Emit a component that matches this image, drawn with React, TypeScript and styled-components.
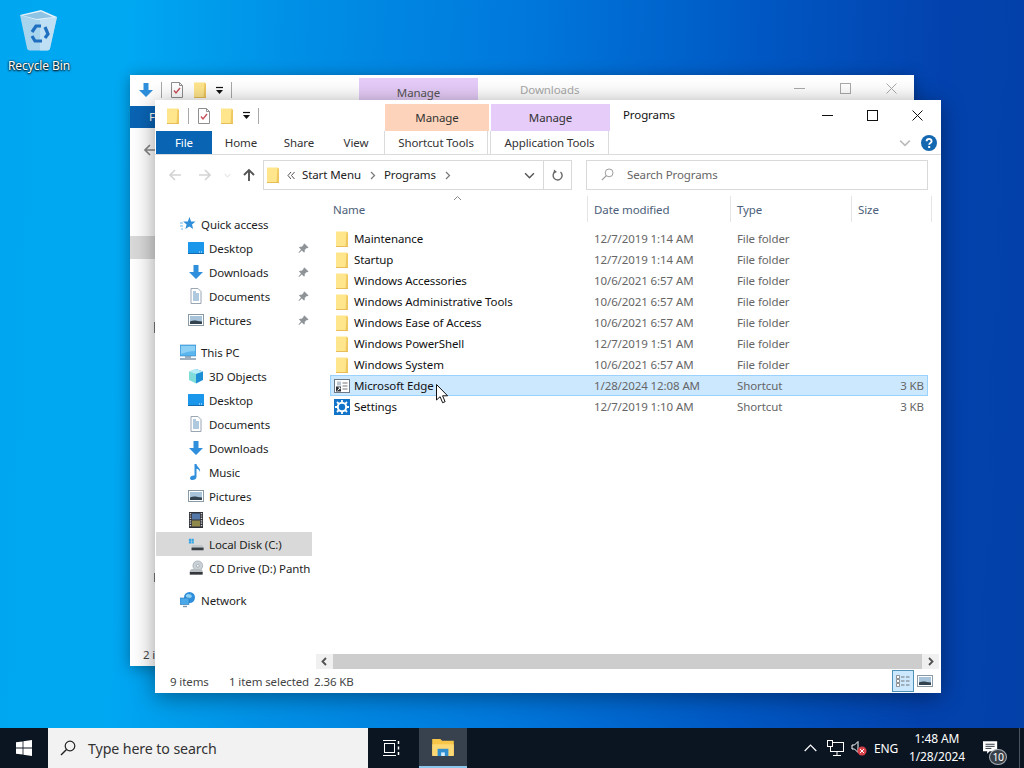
import React from "react";
import styled, { createGlobalStyle } from "styled-components";

const UI_FONT = `"Noto Sans", "Open Sans", "Liberation Sans", sans-serif`;

const GlobalStyle = createGlobalStyle`
  html, body {
    margin: 0;
    padding: 0;
    width: 1024px;
    height: 768px;
    overflow: hidden;
  }
  * {
    box-sizing: border-box;
  }
`;

/* ---------- icons ---------- */

const FolderIcon = () => (
  <svg width="16" height="16" viewBox="0 0 16 16">
    <path d="M2 0.5h10.5l1.5 1.5v13.5H2z" fill="#ffe68c" />
    <path d="M12.5 0.5l1.5 1.5v13.5h-2.5z" fill="#f0c860" />
    <path d="M2 15h12v1H2z" fill="#e8bd58" />
  </svg>
);

const CheckDoc = () => (
  <svg width="16" height="16" viewBox="0 0 16 16">
    <path d="M2.5.5h8l3 3v12h-11z" fill="#fff" stroke="#8f8f8f" />
    <path d="M10.5.5v3h3" fill="none" stroke="#8f8f8f" />
    <path d="M5 8.5l2 2.5 4-5" fill="none" stroke="#c8505a" strokeWidth="1.4" />
  </svg>
);

const ArrowDownIcon = () => (
  <svg width="16" height="16" viewBox="0 0 16 16">
    <path d="M5.5 1h5v7H15l-7 7-7-7h4.5z" fill="#2f8fdc" />
  </svg>
);

const DropMark = () => (
  <svg width="9" height="9" viewBox="0 0 9 9">
    <path d="M1 1.5h7" stroke="#111" strokeWidth="1.2" />
    <path d="M1 4h7L4.5 8z" fill="#111" />
  </svg>
);

const StarIcon = () => (
  <svg width="16" height="16" viewBox="0 0 16 16">
    <path d="M9.5 1l1.6 4.4 4.4.2-3.5 2.8 1.2 4.6-3.9-2.6-3.9 2.6 1.2-4.6-3.5-2.8 4.7-.2z" fill="#2f8fd8" />
    <path d="M0 7h3M0 10h3M1 13h2" stroke="#6db6ea" />
  </svg>
);

const DesktopIcon = () => (
  <svg width="16" height="16" viewBox="0 0 16 16">
    <rect x="0" y="2" width="16" height="11" rx="0.5" fill="#1a96ea" />
    <path d="M0 13h16v1H0z" fill="#1569ad" />
    <path d="M11 12h1M13 12h1" stroke="#dceefb" />
  </svg>
);

const DocIcon = () => (
  <svg width="16" height="16" viewBox="0 0 16 16">
    <path d="M3 .5h7l3 3v12H3z" fill="#fff" stroke="#9aa7b2" />
    <path d="M5 4h3M5 6h6M5 8h6M5 10h6M5 12h6" stroke="#5f93bd" />
  </svg>
);

const PictureIcon = () => (
  <svg width="16" height="16" viewBox="0 0 16 16">
    <rect x="0.5" y="2.5" width="15" height="11" fill="#fff" stroke="#8a99a6" />
    <rect x="2" y="4" width="12" height="8" fill="#a8c4da" />
    <path d="M2 9.5c4-2 7-.5 12 0V12H2z" fill="#33424f" />
  </svg>
);

const MonitorIcon = () => (
  <svg width="16" height="16" viewBox="0 0 16 16">
    <rect x="0" y="1" width="16" height="11" fill="#5cb6ee" stroke="#2b86c8" strokeWidth="0.6" />
    <path d="M1 2h14v5c-5 0-9 1-14 3z" fill="#8dd0f6" />
    <path d="M5 13h6M0 15h16" stroke="#7f97ab" strokeWidth="1.4" />
  </svg>
);

const CubeIcon = () => (
  <svg width="16" height="16" viewBox="0 0 16 16">
    <path d="M8 1l7 2.5V12l-7 3.5z" fill="#1d8fd6" />
    <path d="M8 1L1 3.5V12l7 3.5z" fill="#7fdcd8" />
    <path d="M8 1l7 2.5L8 6 1 3.5z" fill="#b8ecf6" />
  </svg>
);

const MusicIcon = () => (
  <svg width="16" height="16" viewBox="0 0 16 16">
    <path d="M6.5 0h2c.3 3 4.5 4 3.5 8-.5-2-2-3-3.5-3.3V13c0 2-2 3-4 3-1.5 0-2.5-.7-2.5-1.8 0-1.7 2-3 4.5-2.7z" fill="#2f8fdc" />
  </svg>
);

const VideoIcon = () => (
  <svg width="16" height="16" viewBox="0 0 16 16">
    <rect x="1" y="0" width="14" height="16" fill="#2e3138" />
    <rect x="4" y="1.5" width="8" height="6" fill="#5478a8" />
    <rect x="4" y="8.5" width="8" height="6" fill="#8f8a4c" />
    <path d="M2.5 1v14M13.5 1v14" stroke="#d5d5d5" strokeWidth="1.4" strokeDasharray="1.2 1.2" />
  </svg>
);

const DiskIcon = () => (
  <svg width="18" height="16" viewBox="0 0 18 16">
    <path d="M1 2h2.5v2.500H1zM4 2h2.500v2.500H4zM1 5h2.500v2.500H1zM4 5h2.500v2.500H4z" fill="#33a7e6" />
    <path d="M4 10l1-1h11l1.500 3v3H4z" fill="#c3c8cc" />
    <rect x="4" y="12" width="13.5" height="3" fill="#3a3f45" />
  </svg>
);

const CdIcon = () => (
  <svg width="18" height="16" viewBox="0 0 18 16">
    <circle cx="11" cy="5.5" r="5.5" fill="#c9d0d6" stroke="#8d969e" strokeWidth="0.6" />
    <circle cx="11" cy="5.5" r="1.5" fill="#fff" stroke="#7f8890" strokeWidth="0.6" />
    <path d="M2 11l2-2h11l1.500 2.500V13H2z" fill="#b9bec3" />
    <rect x="2" y="12.5" width="14.5" height="3" fill="#34383d" />
  </svg>
);

const NetworkIcon = () => (
  <svg width="16" height="16" viewBox="0 0 16 16">
    <circle cx="9.5" cy="5.5" r="5.5" fill="#2f8fdc" />
    <path d="M6 3c2-2 5-1 6 1-1 3-4 3-6 1z" fill="#8ed0f4" />
    <rect x="0" y="6" width="9" height="6.5" fill="#4aa8e8" stroke="#2175b4" strokeWidth="0.6" />
    <path d="M3 14.5h4" stroke="#7f97ab" strokeWidth="1.4" />
  </svg>
);

const PinIcon = () => (
  <svg width="11" height="11" viewBox="0 0 11 11">
    <path d="M6.5.5l4 4-1 .7-.8-.3-2 2 .1 2-.9.6-2-2L1 10 .5 9.500l2.500-3-2-2 .7-.8 2 .1 2-2-.3-.9z" fill="#8f9499" />
  </svg>
);

const SearchGlass = ({ color, size }: { color: string; size: number }) => (
  <svg width={size} height={size} viewBox="0 0 16 16">
    <circle cx="10" cy="6" r="4.8" fill="none" stroke={color} strokeWidth="1.2" />
    <path d="M6.500 9.500L1 15" stroke={color} strokeWidth="1.4" />
  </svg>
);

const ArrowLeft = ({ color }: { color: string }) => (
  <svg width="14" height="14" viewBox="0 0 14 14">
    <path d="M13 7H2M7 2L2 7l5 5" fill="none" stroke={color} strokeWidth="1.7" />
  </svg>
);

const ArrowRight = ({ color }: { color: string }) => (
  <svg width="14" height="14" viewBox="0 0 14 14">
    <path d="M1 7h11M7 2l5 5-5 5" fill="none" stroke={color} strokeWidth="1.7" />
  </svg>
);

const ArrowUp = ({ color }: { color: string }) => (
  <svg width="14" height="14" viewBox="0 0 14 14">
    <path d="M7 13V2M2 7l5-5 5 5" fill="none" stroke={color} strokeWidth="1.9" />
  </svg>
);

const Chevron = ({ color, size = 10 }: { color: string; size?: number }) => (
  <svg width={size} height={size} viewBox="0 0 10 10">
    <path d="M1 3l4 4 4-4" fill="none" stroke={color} strokeWidth="1.3" />
  </svg>
);

const CaretUp = () => (
  <svg width="9" height="6" viewBox="0 0 9 6">
    <path d="M1 5l3.500-3.500L8 5" fill="none" stroke="#888" />
  </svg>
);

const CrumbSep = ({ double }: { double?: boolean }) => (
  <svg width="8" height="9" viewBox="0 0 8 9">
    {double ? (
      <path d="M4 1L1 4.500 4 8M7.500 1l-3 3.500 3 3.500" fill="none" stroke="#555" />
    ) : (
      <path d="M2 1l3.500 3.500L2 8" fill="none" stroke="#777" strokeWidth="1.2" />
    )}
  </svg>
);

const ScrollChevron = () => (
  <svg width="8" height="9" viewBox="0 0 8 9">
    <path d="M2 1l3.500 3.500L2 8" fill="none" stroke="#505050" strokeWidth="1.8" />
  </svg>
);

const RefreshIcon = () => (
  <svg width="13" height="13" viewBox="0 0 13 13">
    <path d="M9.500 3a4.500 4.500 0 1 1-5.500-.2" fill="none" stroke="#666" strokeWidth="1.4" />
    <path d="M3 .5l3 2.500-3.500 1.500z" fill="#666" />
  </svg>
);

const Minimize = ({ color }: { color: string }) => (
  <svg width="11" height="11" viewBox="0 0 11 11">
    <path d="M0 5.500h11" stroke={color} />
  </svg>
);

const Maximize = ({ color }: { color: string }) => (
  <svg width="11" height="11" viewBox="0 0 11 11">
    <rect x="0.5" y="0.5" width="10" height="10" fill="none" stroke={color} />
  </svg>
);

const CloseMark = ({ color }: { color: string }) => (
  <svg width="11" height="11" viewBox="0 0 11 11">
    <path d="M.5.500l10 10M10.500.500l-10 10" stroke={color} />
  </svg>
);

const ShortcutIcon = () => (
  <svg width="16" height="16" viewBox="0 0 16 16">
    <rect x="0.5" y="1.5" width="15" height="13" fill="#fff" stroke="#6a7a88" />
    <path d="M8.500 5h5M8.500 8h5M8.500 11h5" stroke="#777" />
    <path d="M3 3.500h4v4H3z" fill="#b9c6d2" />
    <rect x="2" y="8.5" width="5" height="5" fill="#2c3136" />
    <path d="M3.500 12.500L6 10M4.500 9.800H6v1.500" stroke="#fff" fill="none" />
  </svg>
);

const SettingsIcon = () => (
  <svg width="16" height="16" viewBox="0 0 16 16">
    <rect width="16" height="16" fill="#1273c9" />
    <circle cx="8" cy="8" r="4.2" fill="none" stroke="#fff" strokeWidth="2" />
    <path d="M8 1v2.500M8 12.500V15M1 8h2.500M12.500 8H15M3 3l1.800 1.800M11.200 11.200L13 13M13 3l-1.800 1.800M4.800 11.200L3 13" stroke="#fff" strokeWidth="1.8" />
  </svg>
);

const HelpIcon = () => (
  <svg width="16" height="16" viewBox="0 0 16 16">
    <circle cx="8" cy="8" r="8" fill="#1468b0" />
    <path d="M5.600 6.200c0-3.200 5-3.200 5 0 0 2-2.400 1.800-2.400 3.600" fill="none" stroke="#fff" strokeWidth="1.8" />
    <rect x="7.2" y="11" width="2" height="2" fill="#fff" />
  </svg>
);

const ViewDetails = () => (
  <svg width="16" height="16" viewBox="0 0 16 16">
    <path d="M1.500 2.500h3v3h-3zM1.500 6.500h3v3h-3zM1.500 10.500h3v3h-3z" fill="#fff" stroke="#777" strokeWidth="0.8" />
    <path d="M6 4h3.500M11 4h3.500M6 8h3.500M11 8h3.500M6 12h3.500M11 12h3.500" stroke="#777" />
  </svg>
);

const Cursor = () => (
  <svg width="13" height="20" viewBox="0 0 13 20">
    <path d="M.5.500v15.500l3.600-3.300 2.500 6 2.500-1-2.500-5.900h5z" fill="#fff" stroke="#111" />
  </svg>
);

const RecycleBinIcon = () => (
  <svg width="42" height="44" viewBox="0 0 42 44">
    <path d="M2 7l7 33c.3 1.500 1 2.500 3 2.500h17c2 0 2.800-1 3.100-2.500L39 9z" fill="#a9d4ee" />
    <path d="M22 8l17 1-7 31.500c-.3 1.200-1 2-2.500 2H22z" fill="#c9e6f6" opacity="0.7" />
    <path d="M2 7l21-5 16 7-20 3z" fill="#e6f4fb" />
    <path d="M5 7.500l18-4 12 5.500-16.500 2z" fill="#8fc3e3" />
    <g fill="none" stroke="#1f6fc0" strokeWidth="3.2">
      <path d="M14 24l4-6h5" />
      <path d="M27 19l3 7-3 4" />
      <path d="M24 33h-7l-3-5" />
    </g>
  </svg>
);

const WindowsLogo = () => (
  <svg width="16" height="16" viewBox="0 0 16 16">
    <path d="M0 2.300l6.600-.9v6.200H0zM7.400 1.300L16 0v7.600H7.400zM0 8.400h6.600v6.200L0 13.700zM7.400 8.400H16V16l-8.600-1.200z" fill="#fff" />
  </svg>
);

const TaskViewIcon = () => (
  <svg width="17" height="16" viewBox="0 0 17 16">
    <path d="M0 .5h13M0 15.500h13" stroke="#fff" />
    <rect x="1.5" y="3.5" width="10" height="9" fill="none" stroke="#fff" />
    <path d="M15.500 1v3M15.500 6.500v3M15.500 12v3" stroke="#fff" strokeWidth="1.5" />
  </svg>
);

const ExplorerIcon = () => (
  <svg width="22" height="18" viewBox="0 0 24 20">
    <path d="M0 1h9l2 2h13v16H0z" fill="#f7c548" />
    <path d="M0 7h24v13H0z" fill="#fbd874" />
    <path d="M6 12h12v8H6z" fill="#2f8fd0" />
    <path d="M10 16h4v4h-4z" fill="#d9eefb" />
  </svg>
);

const TrayCaret = () => (
  <svg width="13" height="8" viewBox="0 0 13 8">
    <path d="M.7 7l5.800-6 5.800 6" fill="none" stroke="#fff" strokeWidth="1.2" />
  </svg>
);

const TrayNetwork = () => (
  <svg width="17" height="16" viewBox="0 0 17 16">
    <rect x="3.5" y="2.5" width="13" height="9" fill="none" stroke="#fff" />
    <rect x="0.5" y="0.5" width="5" height="6" fill="#0b1420" stroke="#fff" />
    <path d="M10 12v3M6 15.500h8" stroke="#fff" />
  </svg>
);

const TraySpeaker = () => (
  <svg width="16" height="16" viewBox="0 0 16 16">
    <path d="M1 5h2.500L7 1.500v11L3.500 9H1z" fill="none" stroke="#fff" />
    <circle cx="11" cy="11" r="4.5" fill="#d9414a" />
    <path d="M9 9l4 4M13 9l-4 4" stroke="#fff" />
  </svg>
);

const TrayNotification = () => (
  <svg width="15" height="14" viewBox="0 0 18 16">
    <path d="M0 0h17v12H8l-3 3v-3H0z" fill="#fff" />
    <path d="M3 3.500h11M3 6h11M3 8.500h7" stroke="#0b1420" />
  </svg>
);

/* ---------- data ---------- */

const quickAccess = [
  { label: "Desktop", icon: <DesktopIcon /> },
  { label: "Downloads", icon: <ArrowDownIcon /> },
  { label: "Documents", icon: <DocIcon /> },
  { label: "Pictures", icon: <PictureIcon /> },
];

const thisPc = [
  { label: "3D Objects", icon: <CubeIcon /> },
  { label: "Desktop", icon: <DesktopIcon /> },
  { label: "Documents", icon: <DocIcon /> },
  { label: "Downloads", icon: <ArrowDownIcon /> },
  { label: "Music", icon: <MusicIcon /> },
  { label: "Pictures", icon: <PictureIcon /> },
  { label: "Videos", icon: <VideoIcon /> },
  { label: "Local Disk (C:)", icon: <DiskIcon />, active: true },
  { label: "CD Drive (D:) Panth", icon: <CdIcon /> },
];

const files = [
  { name: "Maintenance", date: "12/7/2019 1:14 AM", type: "File folder", size: "", icon: <FolderIcon /> },
  { name: "Startup", date: "12/7/2019 1:14 AM", type: "File folder", size: "", icon: <FolderIcon /> },
  { name: "Windows Accessories", date: "10/6/2021 6:57 AM", type: "File folder", size: "", icon: <FolderIcon /> },
  { name: "Windows Administrative Tools", date: "10/6/2021 6:57 AM", type: "File folder", size: "", icon: <FolderIcon /> },
  { name: "Windows Ease of Access", date: "10/6/2021 6:57 AM", type: "File folder", size: "", icon: <FolderIcon /> },
  { name: "Windows PowerShell", date: "12/7/2019 1:51 AM", type: "File folder", size: "", icon: <FolderIcon /> },
  { name: "Windows System", date: "10/6/2021 6:57 AM", type: "File folder", size: "", icon: <FolderIcon /> },
  { name: "Microsoft Edge", date: "1/28/2024 12:08 AM", type: "Shortcut", size: "3 KB", icon: <ShortcutIcon />, selected: true },
  { name: "Settings", date: "12/7/2019 1:10 AM", type: "Shortcut", size: "3 KB", icon: <SettingsIcon /> },
];

/* ---------- desktop ---------- */

const Screen = styled.div`
  width: 1024px;
  height: 768px;
  display: flex;
  flex-direction: column;
  font-family: ${UI_FONT};
  font-size: 11.5px;
  letter-spacing: -0.1px;
  color: #1e1e1e;
`;

const Wallpaper = styled.div`
  position: relative;
  flex: 1;
  overflow: hidden;
  background: linear-gradient(
    92deg,
    #00a6f0 0%,
    #00a8f2 12%,
    #0090e6 28%,
    #0078dc 50%,
    #0058c4 72%,
    #0342ae 90%,
    #0340a8 100%
  );
`;

const BinShortcut = styled.div`
  position: absolute;
  left: 0;
  top: 8px;
  width: 78px;
  display: flex;
  flex-direction: column;
  align-items: center;
  gap: 5px;
  color: #fff;
  font-size: 12px;
  text-shadow: 0 1px 2px #000, 0 0 2px #000;
`;

/* windows sit on the desktop canvas */
const BackWindow = styled.div`
  position: absolute;
  left: 130px;
  top: 75px;
  width: 784px;
  height: 591px;
  display: flex;
  flex-direction: column;
  background: #fff;
  box-shadow: 0 2px 14px rgba(0, 0, 0, 0.35);
`;

const BackTitle = styled.div`
  height: 31px;
  display: flex;
  align-items: flex-start;
  flex-shrink: 0;
  padding: 7px 0 0 8px;
`;

const BackQat = styled.div`
  display: flex;
  align-items: center;
  gap: 7px;
`;

const BackManage = styled.div`
  width: 119px;
  height: 28px;
  margin: -4px 0 0 127px;
  padding-top: 7px;
  text-align: center;
  background: #e6ccf9;
  color: #555;
`;

const BackCaption = styled.div`
  margin-left: 42px;
  color: #aaa;
`;

const BackControls = styled.div`
  margin: 1px 0 0 auto;
  display: flex;
  gap: 35px;
  padding-right: 17px;
`;

const BackFileTab = styled.div`
  width: 56px;
  height: 22px;
  padding: 3px 0 0 19px;
  background: #0a64b4;
  color: #fff;
  flex-shrink: 0;
`;

const BackArrow = styled.div`
  margin: 15px 0 0 13px;
  height: 93px;
  flex-shrink: 0;
`;

const BackSelected = styled.div`
  width: 40px;
  height: 23px;
  background: #d9d9d9;
  flex-shrink: 0;
`;

const BackEdgeMark = styled.div<{ $top: number; $h: number }>`
  width: 1px;
  height: ${(p) => p.$h}px;
  margin: ${(p) => p.$top}px 0 0 24px;
  background: #777;
  flex-shrink: 0;
`;

const BackStatus = styled.div`
  margin-top: auto;
  padding: 0 0 4px 13px;
  color: #444;
`;

const QatSep = styled.span`
  width: 1px;
  height: 16px;
  background: #a8a8a8;
`;

const FrontWindow = styled.div`
  position: absolute;
  left: 155px;
  top: 100px;
  width: 786px;
  height: 593px;
  display: flex;
  flex-direction: column;
  background: #fff;
  box-shadow: 0 4px 22px rgba(0, 0, 0, 0.4);
`;

const TitleBar = styled.div`
  height: 31px;
  display: flex;
  flex-shrink: 0;
`;

const Qat = styled.div`
  width: 230px;
  display: flex;
  align-items: center;
  gap: 7px;
  padding-left: 10px;
`;

const ContextTab = styled.div<{ $bg: string; $w: number }>`
  width: ${(p) => p.$w}px;
  height: 27px;
  margin-top: 4px;
  margin-right: 2px;
  padding-top: 6px;
  text-align: center;
  background: ${(p) => p.$bg};
  color: #333;
`;

const WindowTitle = styled.div`
  padding: 7px 0 0 11px;
  color: #111;
`;

const WindowControls = styled.div`
  margin-left: auto;
  display: flex;
  align-items: center;
  gap: 34px;
  padding: 0 18px 1px 0;
`;

const TabRow = styled.div`
  height: 24px;
  display: flex;
  align-items: stretch;
  flex-shrink: 0;
  border-bottom: 1px solid #dadbdc;
  padding-left: 1px;
`;

const FileTab = styled.div`
  width: 56px;
  display: flex;
  align-items: center;
  justify-content: center;
  background: #0a64b4;
  color: #fff;
`;

const RibbonTab = styled.div<{ $w: number }>`
  width: ${(p) => p.$w}px;
  display: flex;
  align-items: center;
  justify-content: center;
  color: #333;
`;

const ContextLabel = styled.div<{ $w: number }>`
  width: ${(p) => p.$w}px;
  margin-right: 2px;
  display: flex;
  align-items: center;
  justify-content: center;
  border-left: 1px solid #dadbdc;
  border-right: 1px solid #dadbdc;
  color: #333;
`;

const RibbonEnd = styled.div`
  margin-left: auto;
  display: flex;
  align-items: center;
  gap: 10px;
  padding-right: 4px;
`;

const AddressRow = styled.div`
  height: 38px;
  display: flex;
  align-items: flex-start;
  padding-top: 5px;
  flex-shrink: 0;
`;

const NavButtons = styled.div`
  width: 108px;
  height: 30px;
  display: flex;
  align-items: center;
  padding-left: 5px;
`;

const NavSlot = styled.span<{ $w: number }>`
  width: ${(p) => p.$w}px;
  display: flex;
  justify-content: center;
`;

const AddressBox = styled.div`
  width: 309px;
  height: 30px;
  display: flex;
  align-items: center;
  border: 1px solid #d9d9d9;
  padding-left: 1px;
`;

const Crumb = styled.span`
  margin: 0 8px 1px 7px;
  color: #222;
`;

const CrumbLead = styled.span`
  margin-left: 6px;
  display: flex;
`;

const AddressTools = styled.div`
  margin-left: auto;
  height: 100%;
  display: flex;
  align-items: center;
`;

const AddressDrop = styled.div`
  width: 28px;
  height: 100%;
  display: flex;
  align-items: center;
  justify-content: center;
  border-right: 1px solid #d9d9d9;
`;

const AddressRefresh = styled.div`
  width: 27px;
  display: flex;
  justify-content: center;
`;

const SearchBox = styled.div`
  margin-left: 14px;
  width: 342px;
  height: 30px;
  display: flex;
  align-items: center;
  gap: 13px;
  padding: 0 0 1px 14px;
  border: 1px solid #d9d9d9;
  color: #666;
`;

const Body = styled.div`
  flex: 1;
  display: flex;
  min-height: 0;
`;

const NavPane = styled.nav`
  width: 161px;
  padding: 19px 4px 0 1px;
  overflow: hidden;
  flex-shrink: 0;
`;

const NavGroup = styled.div`
  margin-bottom: 8px;
`;

const NavRow = styled.div<{ $level: number; $active?: boolean }>`
  height: 24px;
  display: flex;
  align-items: center;
  gap: 5px;
  padding-left: ${(p) => (p.$level === 1 ? 24 : 32)}px;
  white-space: nowrap;
  overflow: hidden;
  background: ${(p) => (p.$active ? "#d9d9d9" : "transparent")};
`;

const NavIconSlot = styled.span`
  width: 16px;
  height: 16px;
  display: flex;
  align-items: center;
  justify-content: center;
  flex-shrink: 0;
`;

const Pin = styled.span`
  margin-left: auto;
  margin-right: 3px;
  display: flex;
`;

const Content = styled.div`
  flex: 1;
  display: flex;
  flex-direction: column;
  min-width: 0;
`;

const ColumnHeader = styled.div`
  position: relative;
  height: 35px;
  display: grid;
  grid-template-columns: 258px 143px 121px 80px;
  margin-left: 14px;
  padding-top: 3px;
  flex-shrink: 0;
`;

const ColumnTitle = styled.div<{ $indent: number }>`
  height: 26px;
  display: flex;
  align-items: center;
  padding-left: ${(p) => p.$indent}px;
  border-right: 1px solid #e5e5e5;
  color: #4c607a;
`;

const SortCaret = styled.span`
  position: absolute;
  left: 123px;
  top: 2px;
  display: flex;
`;

const FileList = styled.div`
  flex: 1;
  margin-left: 14px;
  width: 598px;
`;

const FileRow = styled.div<{ $selected?: boolean }>`
  height: 21px;
  display: grid;
  grid-template-columns: 258px 143px 121px 76px;
  align-items: center;
  background: ${(p) => (p.$selected ? "#cce8ff" : "transparent")};
  box-shadow: ${(p) => (p.$selected ? "inset 0 0 0 1px #99d1ff" : "none")};
`;

const NameCell = styled.div`
  display: flex;
  align-items: center;
  gap: 4px;
  padding-left: 4px;
  color: #111;
`;

const MetaCell = styled.div<{ $right?: boolean }>`
  color: #666;
  padding-left: ${(p) => (p.$right ? 0 : 6)}px;
  padding-right: ${(p) => (p.$right ? 4 : 0)}px;
  text-align: ${(p) => (p.$right ? "right" : "left")};
  white-space: nowrap;
`;

const ScrollBar = styled.div`
  height: 15px;
  margin-right: 2px;
  display: flex;
  align-items: stretch;
  background: #f0f0f0;
  flex-shrink: 0;
`;

const ScrollEnd = styled.div<{ $flip?: boolean }>`
  width: 17px;
  display: flex;
  align-items: center;
  justify-content: center;
  transform: ${(p) => (p.$flip ? "scaleX(-1)" : "none")};
`;

const ScrollThumb = styled.div`
  flex: 1;
  background: #cdcdcd;
`;

const StatusBar = styled.div`
  height: 24px;
  display: flex;
  align-items: center;
  padding-left: 15px;
  flex-shrink: 0;
  color: #444;
`;

const StatusText = styled.span<{ $w: number }>`
  width: ${(p) => p.$w}px;
  white-space: nowrap;
`;

const ViewToggles = styled.div`
  margin-left: auto;
  display: flex;
  align-items: center;
  gap: 3px;
  padding-right: 8px;
`;

const ViewButton = styled.div<{ $on?: boolean }>`
  width: ${(p) => (p.$on ? 22 : 16)}px;
  height: 22px;
  display: flex;
  align-items: center;
  justify-content: center;
  background: ${(p) => (p.$on ? "#cce8ff" : "transparent")};
  border: ${(p) => (p.$on ? "1px solid #4f92b8" : "none")};
`;

const MouseCursor = styled.div`
  position: absolute;
  left: 436px;
  top: 384px;
  display: flex;
`;

/* ---------- taskbar ---------- */

const Taskbar = styled.div`
  height: 40px;
  display: flex;
  align-items: stretch;
  flex-shrink: 0;
  background: #0b1521;
  color: #fff;
  font-size: 12px;
`;

const StartButton = styled.div`
  width: 48px;
  display: flex;
  align-items: center;
  justify-content: center;
`;

const TaskSearch = styled.div`
  width: 320px;
  display: flex;
  align-items: center;
  gap: 12px;
  padding-left: 12px;
  background: #f2f2f2;
  color: #333;
  font-size: 14.2px;
`;

const TaskButton = styled.div<{ $open?: boolean }>`
  width: ${(p) => (p.$open ? 48 : 50)}px;
  margin-left: ${(p) => (p.$open ? 1 : 0)}px;
  padding-right: ${(p) => (p.$open ? 0 : 3)}px;
  display: flex;
  align-items: center;
  justify-content: center;
  background: ${(p) => (p.$open ? "#37424e" : "transparent")};
  border-bottom: ${(p) => (p.$open ? "2px solid #8cc6ea" : "none")};
`;

const Tray = styled.div`
  margin-left: auto;
  display: flex;
  align-items: center;
  padding-right: 4px;
`;

const TraySlot = styled.div<{ $w: number }>`
  width: ${(p) => p.$w}px;
  display: flex;
  align-items: center;
  justify-content: center;
`;

const Clock = styled.div`
  width: 72px;
  display: flex;
  flex-direction: column;
  align-items: center;
  line-height: 18px;
`;

const NotifySlot = styled.div`
  position: relative;
  width: 46px;
  display: flex;
  padding-right: 12px;
  justify-content: center;
`;

const NotifyBadge = styled.span`
  position: absolute;
  left: 16px;
  top: 8px;
  width: 18px;
  height: 16px;
  border-radius: 50%;
  background: #3a4048;
  border: 1px solid #aab0b6;
  display: flex;
  align-items: center;
  justify-content: center;
  font-size: 10.5px;
  letter-spacing: -0.5px;
`;

const ShowDesktop = styled.div`
  width: 1px;
  height: 100%;
  background: #4a535e;
`;

export default function App() {
  return (
    <Screen>
      <GlobalStyle />
      <Wallpaper>
        <BinShortcut>
          <RecycleBinIcon />
          <span>Recycle Bin</span>
        </BinShortcut>

        <BackWindow>
          <BackTitle>
            <BackQat>
              <ArrowDownIcon />
              <QatSep />
              <CheckDoc />
              <FolderIcon />
              <DropMark />
              <QatSep />
            </BackQat>
            <BackManage>Manage</BackManage>
            <BackCaption>Downloads</BackCaption>
            <BackControls>
              <Minimize color="#aaa" />
              <Maximize color="#aaa" />
              <CloseMark color="#aaa" />
            </BackControls>
          </BackTitle>
          <BackFileTab>File</BackFileTab>
          <BackArrow>
            <ArrowLeft color="#888" />
          </BackArrow>
          <BackSelected />
          <BackEdgeMark $top={63} $h={11} />
          <BackEdgeMark $top={240} $h={9} />
          <BackStatus>2 i</BackStatus>
        </BackWindow>

        <FrontWindow>
          <TitleBar>
            <Qat>
              <FolderIcon />
              <QatSep />
              <CheckDoc />
              <FolderIcon />
              <DropMark />
              <QatSep />
            </Qat>
            <ContextTab $bg="#fdd3bb" $w={104}>Manage</ContextTab>
            <ContextTab $bg="#e6ccf9" $w={119}>Manage</ContextTab>
            <WindowTitle>Programs</WindowTitle>
            <WindowControls>
              <Minimize color="#111" />
              <Maximize color="#111" />
              <CloseMark color="#111" />
            </WindowControls>
          </TitleBar>

          <TabRow>
            <FileTab>File</FileTab>
            <RibbonTab $w={58}>Home</RibbonTab>
            <RibbonTab $w={58}>Share</RibbonTab>
            <RibbonTab $w={56}>View</RibbonTab>
            <ContextLabel $w={104}>Shortcut Tools</ContextLabel>
            <ContextLabel $w={119}>Application Tools</ContextLabel>
            <RibbonEnd>
              <Chevron color="#bbb" size={12} />
              <HelpIcon />
            </RibbonEnd>
          </TabRow>

          <AddressRow>
            <NavButtons>
              <NavSlot $w={30}><ArrowLeft color="#d4d4d4" /></NavSlot>
              <NavSlot $w={30}><ArrowRight color="#d4d4d4" /></NavSlot>
              <NavSlot $w={14}><Chevron color="#d4d4d4" size={7} /></NavSlot>
              <NavSlot $w={29}><ArrowUp color="#555" /></NavSlot>
            </NavButtons>
            <AddressBox>
              <FolderIcon />
              <CrumbLead>
                <CrumbSep double />
              </CrumbLead>
              <Crumb>Start Menu</Crumb>
              <CrumbSep />
              <Crumb>Programs</Crumb>
              <CrumbSep />
              <AddressTools>
                <AddressDrop>
                  <Chevron color="#555" size={11} />
                </AddressDrop>
                <AddressRefresh>
                  <RefreshIcon />
                </AddressRefresh>
              </AddressTools>
            </AddressBox>
            <SearchBox>
              <SearchGlass color="#999" size={13} />
              <span>Search Programs</span>
            </SearchBox>
          </AddressRow>

          <Body>
            <NavPane>
              <NavGroup>
                <NavRow $level={1}>
                  <NavIconSlot><StarIcon /></NavIconSlot>
                  Quick access
                </NavRow>
                {quickAccess.map((item) => (
                  <NavRow $level={2} key={item.label}>
                    <NavIconSlot>{item.icon}</NavIconSlot>
                    {item.label}
                    <Pin><PinIcon /></Pin>
                  </NavRow>
                ))}
              </NavGroup>
              <NavGroup>
                <NavRow $level={1}>
                  <NavIconSlot><MonitorIcon /></NavIconSlot>
                  This PC
                </NavRow>
                {thisPc.map((item) => (
                  <NavRow $level={2} $active={item.active} key={item.label}>
                    <NavIconSlot>{item.icon}</NavIconSlot>
                    {item.label}
                  </NavRow>
                ))}
              </NavGroup>
              <NavRow $level={1}>
                <NavIconSlot><NetworkIcon /></NavIconSlot>
                Network
              </NavRow>
            </NavPane>

            <Content>
              <ColumnHeader>
                <SortCaret><CaretUp /></SortCaret>
                <ColumnTitle $indent={3}>Name</ColumnTitle>
                <ColumnTitle $indent={6}>Date modified</ColumnTitle>
                <ColumnTitle $indent={6}>Type</ColumnTitle>
                <ColumnTitle $indent={6}>Size</ColumnTitle>
              </ColumnHeader>
              <FileList>
                {files.map((file) => (
                  <FileRow $selected={file.selected} key={file.name}>
                    <NameCell>
                      {file.icon}
                      {file.name}
                    </NameCell>
                    <MetaCell>{file.date}</MetaCell>
                    <MetaCell>{file.type}</MetaCell>
                    <MetaCell $right>{file.size}</MetaCell>
                  </FileRow>
                ))}
              </FileList>
              <ScrollBar>
                <ScrollEnd $flip><ScrollChevron /></ScrollEnd>
                <ScrollThumb />
                <ScrollEnd><ScrollChevron /></ScrollEnd>
              </ScrollBar>
            </Content>
          </Body>

          <StatusBar>
            <StatusText $w={59}>9 items</StatusText>
            <StatusText $w={85}>1 item selected</StatusText>
            <StatusText $w={60}>2.36 KB</StatusText>
            <ViewToggles>
              <ViewButton $on><ViewDetails /></ViewButton>
              <ViewButton><PictureIcon /></ViewButton>
            </ViewToggles>
          </StatusBar>
        </FrontWindow>

        <MouseCursor>
          <Cursor />
        </MouseCursor>
      </Wallpaper>

      <Taskbar>
        <StartButton>
          <WindowsLogo />
        </StartButton>
        <TaskSearch>
          <SearchGlass color="#222" size={16} />
          <span>Type here to search</span>
        </TaskSearch>
        <TaskButton>
          <TaskViewIcon />
        </TaskButton>
        <TaskButton $open>
          <ExplorerIcon />
        </TaskButton>
        <Tray>
          <TraySlot $w={26}><TrayCaret /></TraySlot>
          <TraySlot $w={24}><TrayNetwork /></TraySlot>
          <TraySlot $w={24}><TraySpeaker /></TraySlot>
          <TraySlot $w={30}>ENG</TraySlot>
          <Clock>
            <span>1:48 AM</span>
            <span>1/28/2024</span>
          </Clock>
          <NotifySlot>
            <TrayNotification />
            <NotifyBadge>10</NotifyBadge>
          </NotifySlot>
          <ShowDesktop />
        </Tray>
      </Taskbar>
    </Screen>
  );
}
